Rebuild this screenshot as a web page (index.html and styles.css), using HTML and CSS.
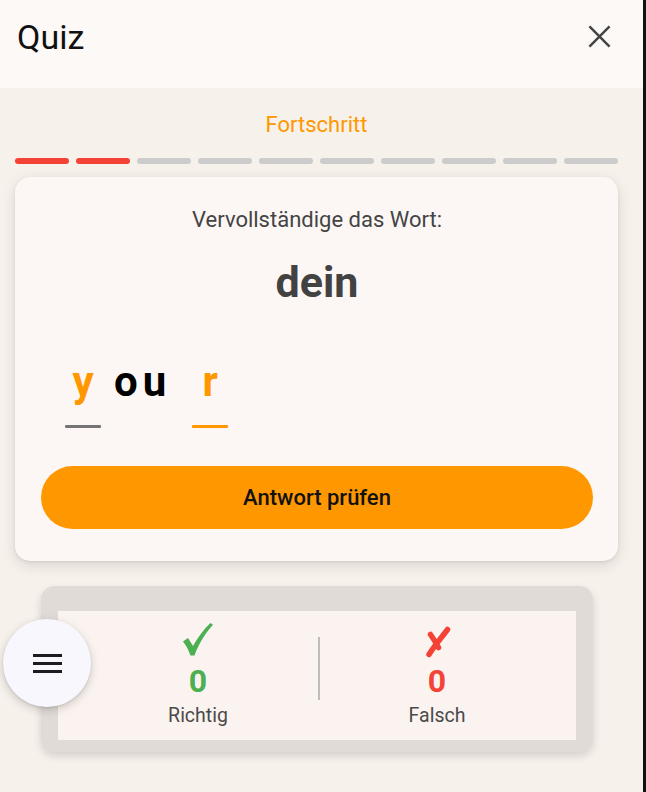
FILE: index.html
```html
<!DOCTYPE html>
<html lang="de">
<head>
<meta charset="utf-8">
<title>Quiz</title>
<link rel="stylesheet" href="styles.css">
</head>
<body>
<div class="screen">
  <div class="app">
    <header class="topbar">
      <h1 class="title">Quiz</h1>
      <button class="close" aria-label="Schließen">
        <svg viewBox="0 0 24 24" width="23" height="23"><path d="M1.5 1.5 L22.5 22.5 M22.5 1.5 L1.5 22.5" stroke="#444" stroke-width="2.6" fill="none"/></svg>
      </button>
    </header>
    <main class="content">
      <div class="progress-label">Fortschritt</div>
      <div class="progress">
        <span class="seg done"></span><span class="seg done"></span><span class="seg"></span><span class="seg"></span><span class="seg"></span><span class="seg"></span><span class="seg"></span><span class="seg"></span><span class="seg"></span><span class="seg"></span>
      </div>
      <section class="card">
        <p class="prompt">Vervollständige das Wort:</p>
        <p class="word">dein</p>
        <div class="letters">
          <div class="slot slot-y"><span class="ch input">y</span><span class="line grey"></span></div>
          <span class="ch fixed fixed-o">o</span>
          <span class="ch fixed fixed-u">u</span>
          <div class="slot"><span class="ch input">r</span><span class="line orange"></span></div>
        </div>
        <button class="check">Antwort prüfen</button>
      </section>
      <section class="score">
        <div class="score-inner">
          <div class="stat">
            <svg class="mark" viewBox="0 0 30 33" width="30" height="33" aria-label="richtig">
              <path class="ok-fill" d="M0 18.5 L5 15 L10 23 C15 14 21 6 27.5 0 L30 1.8 C23 9.5 16 20 11.5 32.5 L7.5 32.5 C5.5 27 3 22 0 18.5 Z"/>
            </svg>
            <span class="num ok">0</span>
            <span class="stat-label">Richtig</span>
          </div>
          <div class="divider"></div>
          <div class="stat">
            <svg class="mark" viewBox="0 0 30 33" width="30" height="33" aria-label="falsch">
              <path class="bad-stroke" d="M25.5 6.5 C20 14 13 22 7 31.5 M8.5 11.5 C11 15 14 20 16.5 24.5"/>
            </svg>
            <span class="num bad">0</span>
            <span class="stat-label">Falsch</span>
          </div>
        </div>
      </section>
    </main>
  </div>
  <div class="edge"></div>
</div>
<button class="fab" aria-label="Menü">
  <span class="bar"></span><span class="bar"></span><span class="bar"></span>
</button>
</body>
</html>
```
FILE: styles.css
```css
* { box-sizing: border-box; }
html, body { margin: 0; padding: 0; }
body {
  font-family: Roboto, "Noto Sans", "DejaVu Sans", sans-serif;
  background: #f7f1ec;
  width: 646px;
  height: 792px;
  overflow: hidden;
}
.screen {
  display: flex;
  width: 646px;
  height: 792px;
}
.app {
  width: 643px;
  height: 792px;
  background: #f7f1ec;
  display: flex;
  flex-direction: column;
}
.edge {
  width: 3px;
  background: #111;
}
.topbar {
  height: 88px;
  background: #fdf9f6;
  display: flex;
  align-items: center;
  justify-content: space-between;
  padding: 0 32px 15px 17px;
}
.title {
  margin: 0;
  font-size: 34px;
  font-weight: 400;
  color: #111;
}
.close {
  border: 0;
  background: none;
  padding: 0;
  width: 23px;
  height: 23px;
  display: flex;
}
.content {
  padding: 24px 25px 0 15px;
  display: flex;
  flex-direction: column;
}
.progress-label {
  text-align: center;
  font-size: 22px;
  color: #ff9800;
}
.progress {
  display: flex;
  gap: 7px;
  margin-top: 21px;
}
.seg {
  flex: 1;
  height: 6px;
  border-radius: 3px;
  background: #cccccc;
}
.seg.done { background: #f44336; }
.card {
  margin-top: 13px;
  background: #fcf7f4;
  border-radius: 15px;
  box-shadow: 0 4px 14px rgba(0,0,0,0.12), 0 1px 3px rgba(0,0,0,0.08);
  padding: 30px 25px 32px 26px;
  display: flex;
  flex-direction: column;
}
.prompt {
  margin: 0;
  text-align: center;
  font-size: 22px;
  color: #444;
}
.word {
  margin: 25px 0 0;
  text-align: center;
  font-size: 43px;
  font-weight: 700;
  color: #424242;
}
.letters {
  display: flex;
  align-items: flex-start;
  margin-top: 50px;
  padding-left: 24px;
}
.ch {
  font-size: 42px;
  font-weight: 700;
  line-height: 49px;
}
.slot {
  width: 36px;
  display: flex;
  flex-direction: column;
  align-items: center;
}
.slot-y { margin-right: 13px; }
.input { color: #ff9800; }
.fixed { color: #000; }
.fixed-o { margin-right: 5px; }
.fixed-u { margin-right: 26px; }
.line {
  width: 36px;
  height: 3px;
  margin-top: 19px;
  border-radius: 1px;
}
.line.grey { background: #757575; }
.line.orange { background: #ff9800; }
.check {
  margin-top: 38px;
  height: 63px;
  border: 0;
  border-radius: 32px;
  background: #ff9800;
  color: #111;
  font-family: Roboto, "Noto Sans", sans-serif;
  font-size: 22px;
  font-weight: 500;
}
.score {
  margin: 25px 0 0 26px;
  width: 552px;
  background: #e0dbd6;
  border-radius: 14px;
  box-shadow: 0 4px 8px rgba(0,0,0,0.14);
  padding: 25px 17px 12px 17px;
}
.score-inner {
  background: #fbf3ef;
  height: 129px;
  display: grid;
  grid-template-columns: 240px 2px 1fr;
  padding: 12px 22px 0 20px;
  align-items: start;
}
.divider {
  width: 2px;
  height: 63px;
  background: #bdbdbd;
  margin-top: 14px;
}
.stat {
  display: flex;
  flex-direction: column;
  align-items: center;
}
.mark {
  display: block;
  overflow: visible;
}
.ok-fill { fill: #4caf50; }
.bad-stroke {
  fill: none;
  stroke: #f44336;
  stroke-width: 5.5;
  stroke-linecap: round;
}
.num {
  font-size: 32px;
  font-weight: 700;
  line-height: 37px;
  margin-top: 7px;
}
.ok { color: #4caf50; }
.bad { color: #f44336; }
.stat-label {
  font-size: 19.5px;
  color: #4a4a4a;
  line-height: 23px;
  margin-top: 4px;
}
.fab {
  position: fixed;
  left: 3px;
  top: 619px;
  width: 88px;
  height: 88px;
  border-radius: 50%;
  border: 0;
  background: #f8f7fd;
  box-shadow: 0 3px 10px rgba(0,0,0,0.18), 0 1px 3px rgba(0,0,0,0.1);
  display: flex;
  flex-direction: column;
  align-items: center;
  justify-content: center;
  gap: 5px;
  padding: 0;
}
.bar {
  width: 29px;
  height: 3px;
  background: #1c1b1f;
}
```
